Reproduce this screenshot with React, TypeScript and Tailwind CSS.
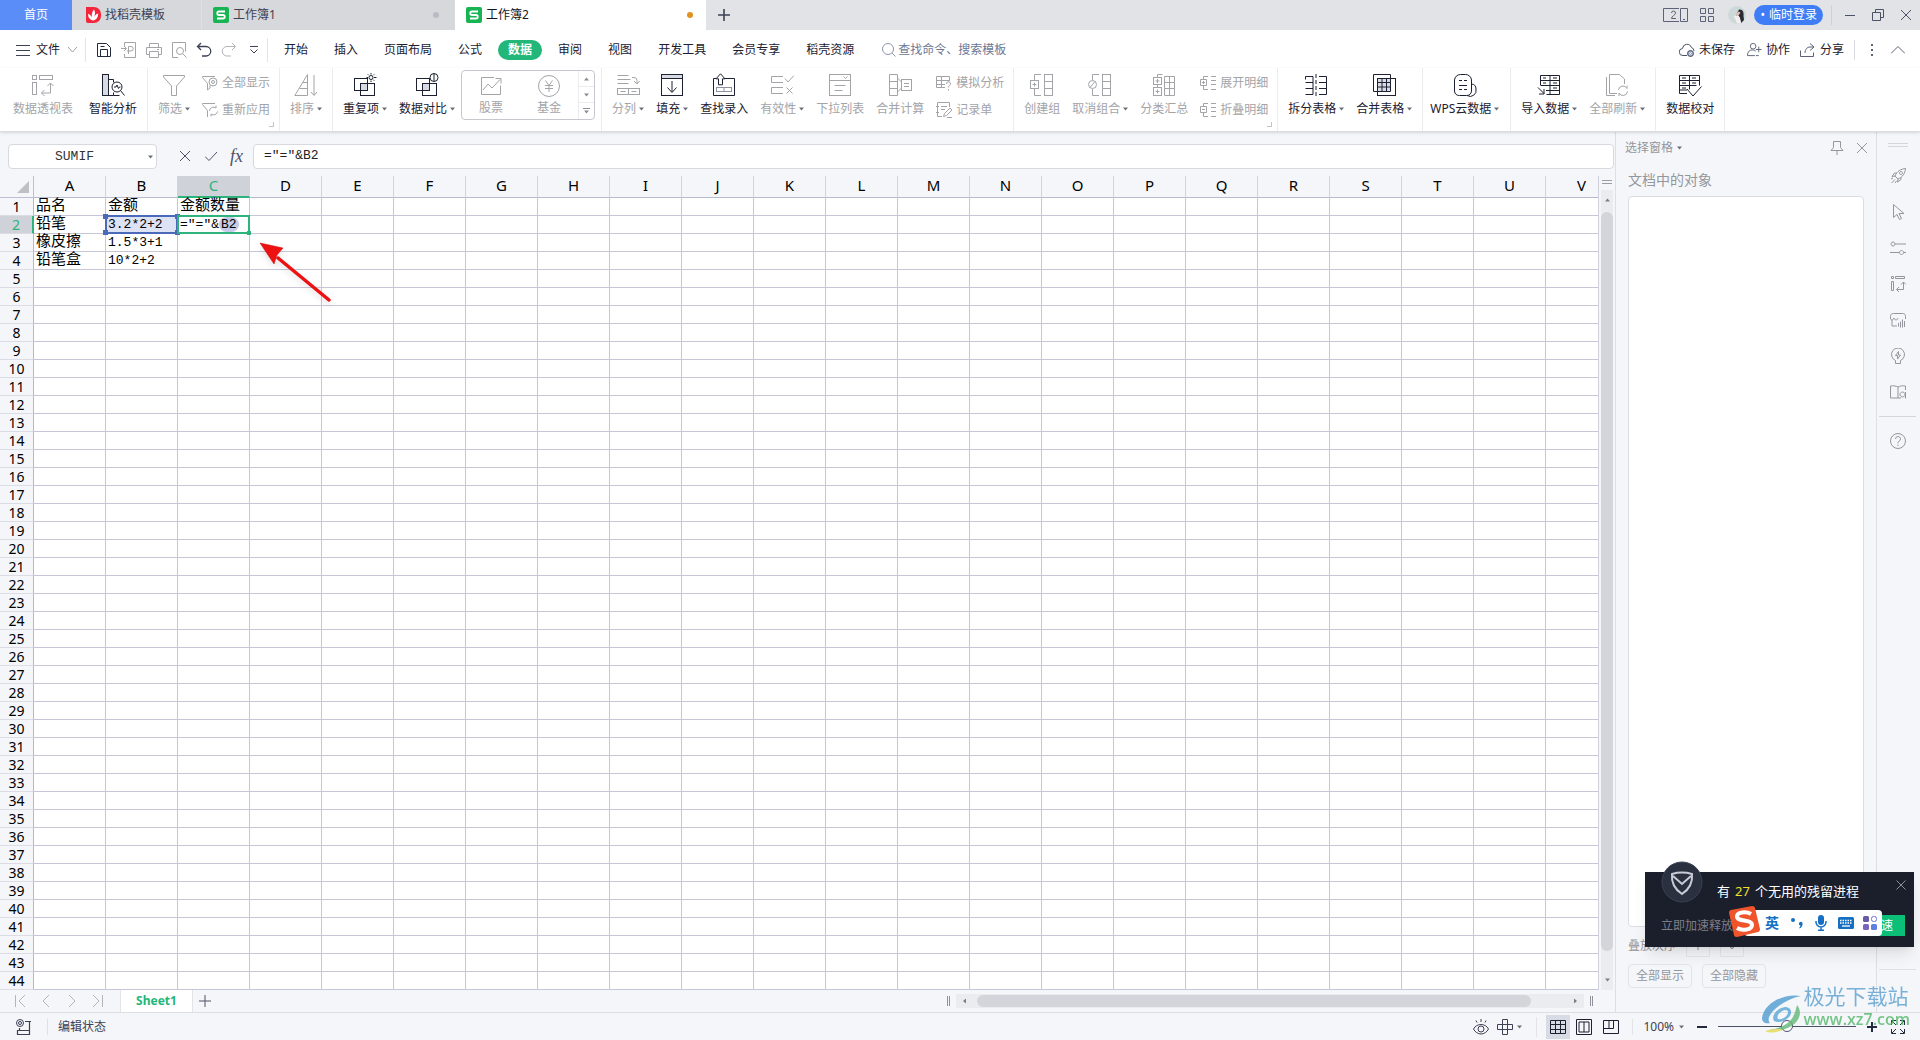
import type { ReactNode } from 'react';

const COLUMNS = 'ABCDEFGHIJKLMNOPQRSTUV'.split('');
const ROW_COUNT = 44;

const CELLS: Record<string, string> = {
  A1: '品名',
  B1: '金额',
  C1: '金额数量',
  A2: '铅笔',
  B2: '3.2*2+2',
  A3: '橡皮擦',
  B3: '1.5*3+1',
  A4: '铅笔盒',
  B4: '10*2+2',
};

interface IconProps {
  children: ReactNode;
  className?: string;
  box?: number;
}

function Icon({ children, className = 'size-6', box = 24 }: IconProps) {
  return (
    <svg
      viewBox={`0 0 ${box} ${box}`}
      className={`shrink-0 ${className}`}
      fill="none"
      stroke="currentColor"
      aria-hidden="true"
    >
      {children}
    </svg>
  );
}

function Caret({ className = 'text-[#6b6e78]' }: { className?: string }) {
  return (
    <svg viewBox="0 0 5 4" className={`h-1 w-[5px] shrink-0 ${className}`} fill="currentColor" aria-hidden="true">
      <path d="M0 .5h5L2.5 3.5z" />
    </svg>
  );
}

/* ---------- ribbon icons, 24px grid ---------- */

const pivotIcon = (
  <Icon>
    <rect x="1.5" y="2.5" width="4" height="4" />
    <rect x="8.5" y="2.5" width="13" height="4" />
    <rect x="1.5" y="9.5" width="4" height="12" />
    <path d="M19.5 10.5v9.5h-9M16.5 13l3-3 3 3M13.5 17l-3 3 3 3" />
  </Icon>
);

const analysisIcon = (
  <Icon>
    <rect x="1.5" y="1.5" width="6" height="21" fill="#d9dbe4" />
    <path d="M7.5 6.5h5v3M7.5 22.5h5v-3M12.5 22.5h6" />
    <circle cx="16" cy="14" r="5" />
    <path d="M19.5 17.5l4 5M13 14h2l1-2 1.5 3.5 1-1.5h1" />
  </Icon>
);

const filterIcon = (
  <Icon>
    <path d="M1.5 2.5h21v1.500L14.500 13v9.500h-5V13L1.500 4z" />
  </Icon>
);

const sortIcon = (
  <Icon>
    <path d="M13.500 1.500L.800 22.500h12.700zM9 9.500h4.500M5.500 15.500h8M20 2v20M17 19l3 3.500 3-3.500" />
  </Icon>
);

const duplicateIcon = (
  <Icon>
    <rect x="1.5" y="5.5" width="13" height="12" />
    <rect x="7.5" y="10.5" width="14" height="12" />
    <rect x="7.5" y="10.5" width="7" height="7" fill="#d9dbe4" />
    <circle cx="18" cy="4.5" r="2" />
    <path d="M18 0v1.5M18 7.5V9M13.5 4.5H15M21 4.5h2.5M14.8 1.3l1 1M21.2 1.3l-1 1M21.2 7.7l-1-1" />
  </Icon>
);

const compareIcon = (
  <Icon>
    <rect x="1.5" y="5.5" width="13" height="12" />
    <rect x="7.5" y="10.5" width="14" height="12" />
    <rect x="7.5" y="10.5" width="7" height="7" fill="#d9dbe4" />
    <circle cx="19" cy="4.5" r="4" fill="#fff" />
    <path d="M19 .5v8" />
  </Icon>
);

const stockIcon = (
  <Icon>
    <path d="M15 3.5H2.5v17h19v-9M4 16l5-6 4 4 8-8.5M16.5 4.5H22v5" />
  </Icon>
);

const fundIcon = (
  <Icon>
    <circle cx="12" cy="12" r="10.5" />
    <path d="M8.5 6.5l3.5 5 3.5-5M8 11.5h8M8 14.5h8M12 11.5V18" />
  </Icon>
);

const splitIcon = (
  <Icon>
    <path d="M1.5 2.5h11M1.5 6.5h13M1.5 10.5h11M16 4.5h2a3 3 0 0 1 3 3v3M18 8l3 3 2.5-3" />
    <rect x="1.5" y="15.5" width="11" height="6" />
    <rect x="12.5" y="15.5" width="11" height="6" />
    <path d="M4.500 18.500h5M15.500 18.500h5" />
  </Icon>
);

const fillIcon = (
  <Icon>
    <rect x="1.5" y="1.5" width="21" height="4" fill="#d9dbe4" />
    <rect x="1.5" y="1.5" width="21" height="21" />
    <path d="M12 8v11M7.5 14.5l4.5 5 4.5-5" />
  </Icon>
);

const lookupIcon = (
  <Icon>
    <path d="M4 5.5H1.500v17h21v-17H12.500" />
    <path d="M8.500.8l4.500 5h-2.500v6h-4v-6H4z" />
    <rect x="4.5" y="14.5" width="15" height="4" stroke="#8e929f" />
    <path d="M12 14.5v4" stroke="#8e929f" />
  </Icon>
);

const validIcon = (
  <Icon>
    <path d="M13 3.5H1.5v6H13M13 14.5H1.5v6H13M15 5.5L18 9l6-6.5M16.5 14.5l6 6M22.5 14.5l-6 6" />
  </Icon>
);

const listIcon = (
  <Icon>
    <rect x="1.5" y="1.5" width="21" height="21" />
    <path d="M1.5 7.500h21M6.500 12.500h11M6.500 17.500h8M15.500 3.500l2 2 2-2" />
  </Icon>
);

const consolidateIcon = (
  <Icon>
    <path d="M1.5 1.5h8v21h-8zM1.5 8.5h8M1.5 15.5h8M9.5 5l4 4M9.5 19l4-4" />
    <rect x="13.5" y="6.5" width="10" height="11" />
    <path d="M16 10.500h5M16 13.500h5" />
  </Icon>
);

const groupIcon = (
  <Icon>
    <rect x="14.5" y="1.5" width="8" height="21" />
    <path d="M14.5 8.5h8M14.5 15.5h8M11 1.5H4.500v6M4.500 15.500v7H11" />
    <rect x=".5" y="7.5" width="8" height="8" />
    <path d="M4.500 9.500v4M2.500 11.500h4" />
  </Icon>
);

const ungroupIcon = (
  <Icon>
    <rect x="14.5" y="1.5" width="8" height="21" />
    <path d="M14.5 8.5h8M14.5 15.5h8M11 1.5H4.500v6M4.500 16v6.500H11" />
    <circle cx="4.500" cy="11.500" r="4" />
    <path d="M2 14.500l5-6" />
  </Icon>
);

const subtotalIcon = (
  <Icon>
    <path d="M12.5 3.5h10v19h-10zM12.5 9.500h10M12.500 15.500h10M17.500 3.500v19M5.500 4.500v-3h5M5.500 11.500v3" />
    <rect x="1.5" y="4.5" width="8" height="7" />
    <rect x="1.5" y="14.5" width="8" height="8" />
    <path d="M5.5 6v4M3.5 8h4M5.5 16.5v4M3.5 18.5h4" />
  </Icon>
);

const splitTableIcon = (
  <Icon>
    <path d="M9 3.5H1.5M1.500 21.500H9M9 3.500v18M1.500 9.500H9M1.500 15.500H9M1.500 3.500v3M15 3.500h7.500v18H15M15 9.500h7.500M15 15.500h7.500" />
    <path d="M12 1v22" strokeDasharray="4 2" />
  </Icon>
);

const mergeTableIcon = (
  <Icon>
    <path d="M5.500 18.500h-4v-17h17v4" />
    <rect x="5.5" y="5.5" width="18" height="17" />
    <path d="M5.500 5.500h13v13h-13zM5.500 9.500h13M5.500 14h13M10 5.500v13M14.500 5.500v13" fill="#d9dbe4" />
  </Icon>
);

const cloudDataIcon = (
  <Icon>
    <path d="M18.5 7v11a5 5 0 0 1-5 4.5h-7a5 5 0 0 1-5-4.5V7a6 6 0 0 1 6-5.5h5a6 6 0 0 1 6 5.5zM18.500 11a5 5 0 0 1 4.500 5 6 6 0 0 1-9 6.500" />
    <path d="M6 7.5h3M11 7.5h3M6 12.5h8M6 16.5h3M11 16.5h3" />
  </Icon>
);

const importIcon = (
  <Icon>
    <path d="M3.5 12V2.5h19v19h-13M3.5 7.5h19M3.5 12.5h19M9 17.5h13.5M13 2.5v19" />
    <path d="M6 5h3M6 10h3M16 5h4M16 10h4M16 15h4M1 14.5l6 6M7 16v5H2" />
  </Icon>
);

const refreshAllIcon = (
  <Icon>
    <path d="M12 20.5H4.5v-19h10l5 4.5v5M1.5 4v18.5H10" />
    <path d="M13.5 17a4.500 4.500 0 0 1 8.500-1.500v-3M22.500 18.500a4.500 4.500 0 0 1-8.500 1.500v3" />
  </Icon>
);

const proofIcon = (
  <Icon>
    <path d="M9 20.500H1.500v-18h20v10M1.500 7.500h20M1.500 12.500h17M1.500 17H9M11.500 2.500v14" />
    <path d="M4 5h4M4 10h4M14 5h4M14 10h4M4 15h4M9 16l6 7 8.500-9.500" />
  </Icon>
);

/* ---------- title bar ---------- */

function SpreadsheetLogo() {
  return (
    <svg viewBox="0 0 16 16" className="size-4 shrink-0" aria-hidden="true">
      <rect width="16" height="16" rx="2" fill="#18b352" />
      <path d="M12 4.500H6a1.700 1.700 0 0 0 0 3.500h4a1.700 1.700 0 0 1 0 3.500H4" fill="none" stroke="#fff" strokeWidth="1.8" />
    </svg>
  );
}

function DocerLogo() {
  return (
    <svg viewBox="0 0 16 16" className="size-4 shrink-0" aria-hidden="true">
      <path d="M1 0h8a7 7 0 0 1 7 7v2a7 7 0 0 1-7 7H3a2 2 0 0 1-2-2z" fill="#f5263c" />
      <path
        d="M7.800 13.500C4 12.500 2.800 9.500 3.200 6.800c2 .900 3.300 2.300 3.900 4.200C6.300 7.500 7 4.500 9 2.500c1.500 2.300 1.300 5-.200 8.200.900-2.300 2.300-3.800 4.400-4.300-.100 3.800-1.700 6.500-5.400 7.100z"
        fill="#fff"
      />
    </svg>
  );
}

function TitleBar() {
  return (
    <header className="flex h-[30px] shrink-0 items-center bg-[#e1e3e7] text-[12px] leading-4 text-[#3c4254]">
      <button className="h-full w-[72px] bg-[#5b8df8] text-white">首页</button>
      <button className="flex h-full w-[129px] items-center gap-1 bg-[#d6d8dc] pl-[13px]">
        <DocerLogo />
        找稻壳模板
      </button>
      <button className="flex h-full w-[254px] items-center gap-1 border-l border-[#dddfe3] bg-[#d6d8dc] pr-4 pl-[11px]">
        <SpreadsheetLogo />
        工作簿1
        <span className="ml-auto size-1.5 rounded-full bg-[#b9bcc4]" />
      </button>
      <button className="flex h-full w-[251px] items-center gap-1 bg-white pr-[13px] pl-[11px] text-[#15171c]">
        <SpreadsheetLogo />
        工作簿2
        <span className="ml-auto size-1.5 rounded-full bg-[#e0921e]" />
      </button>
      <button className="ml-3 text-[#3c4254]" aria-label="新建">
        <Icon className="size-3" box={12}>
          <path d="M6 0v12M0 6h12" strokeWidth="1.6" />
        </Icon>
      </button>
      <div className="ml-auto flex h-full items-center pr-2">
        <button className="mr-3" aria-label="窗口">
          <svg viewBox="0 0 25 15" className="h-[15px] w-[25px]" fill="none" stroke="#5d6376" aria-hidden="true">
            <path d="M16 .5H.5v13H16M17.5.5h7v13h-7zM20 11.5h2M8.500 5a2 2 0 0 1 4 0c0 2-4 3-4 5.500h4.500" />
          </svg>
        </button>
        <button className="mr-[14px] text-[#5d6376]" aria-label="应用">
          <Icon className="size-[14px]" box={14}>
            <path d="M.5.5h5v5h-5zM8.500.5h5v5h-5zM.5 8.500h5v5h-5zM8.500 8.500h5v5h-5z" />
          </Icon>
        </button>
        <svg viewBox="0 0 18 18" className="mr-2 size-[18px]" aria-hidden="true">
          <circle cx="9" cy="9" r="9" fill="#cdd9d8" />
          <path d="M11 3.500c4-.500 5 3 4.500 6.500L16 14l-3 3-1-4-1-3-3 1 1-4z" fill="#2b2a33" />
          <path d="M6 10l4-1 2 3 1 5-4 .500z" fill="#f3eef0" />
          <path d="M7 8.500l3.500-3 2 1-2 3z" fill="#e3bfb6" />
        </svg>
        <button className="h-5 rounded-full bg-[#3f7df6] px-[6px] whitespace-nowrap text-white">
          <span className="mr-1">•</span>临时登录
        </button>
        <span className="ml-2 h-5 w-px bg-[#cfd1d6]" />
        <button className="ml-3 text-[#4c5266]" aria-label="最小化">
          <Icon className="size-3" box={12}>
            <path d="M1 6.5h10" />
          </Icon>
        </button>
        <button className="ml-4 text-[#4c5266]" aria-label="还原">
          <Icon className="size-3" box={12}>
            <path d="M.5 3.5h8v8h-8zM3.5 3.5v-3h8v8h-3" />
          </Icon>
        </button>
        <button className="ml-4 text-[#4c5266]" aria-label="关闭">
          <Icon className="size-3" box={12}>
            <path d="M1 1l10 10M11 1L1 11" />
          </Icon>
        </button>
      </div>
    </header>
  );
}

/* ---------- menu row ---------- */

const MENUS = ['开始', '插入', '页面布局', '公式', '数据', '审阅', '视图', '开发工具', '会员专享', '稻壳资源'];

function MenuBar() {
  return (
    <nav className="flex h-[38px] shrink-0 items-center pt-px pr-[15px] pl-4 text-[12px] leading-4 whitespace-nowrap text-[#1c2030]">
      <button className="flex items-center gap-[6px]">
        <Icon className="size-[14px] text-[#3c4254]" box={14}>
          <path d="M0 2.5h14M0 7.5h14M0 12.5h14" />
        </Icon>
        文件
        <Icon className="ml-[2px] size-[9px] text-[#9a9da6]" box={9}>
          <path d="M0 2l4.5 5L9 2" />
        </Icon>
      </button>
      <span className="ml-2 h-6 w-px bg-[#e3e4e8]" />
      <div className="ml-[10px] flex items-center gap-[9px]">
        <button aria-label="保存" className="text-[#242a3e]">
          <Icon className="size-4" box={16}>
            <path d="M1.5 1.5h9l4 4v9h-13zM4.5 14V7.500h7V14M4.500 4.500h4" />
          </Icon>
        </button>
        <button aria-label="输出为PDF" className="text-[#a3a4a8]">
          <Icon className="size-4" box={16}>
            <path d="M3.5 4V.5h11v15h-11V12M0 6.5h5M3 4l2.5 2.5L3 9M7.500 12V4.500h2.500a2 2 0 0 1 0 4.500H6" />
          </Icon>
        </button>
        <button aria-label="打印" className="text-[#a3a4a8]">
          <Icon className="size-4" box={16}>
            <path d="M3.5 5V1.5h9V5M3.5 12.5h-3v-7h15v7h-3M3.5 9.5h9v6h-9zM11 7.5h2" />
          </Icon>
        </button>
        <button aria-label="打印预览" className="text-[#a3a4a8]">
          <Icon className="size-4" box={16}>
            <path d="M7 15.5H1.5V.5h13v9" />
            <circle cx="9" cy="9" r="3.5" />
            <path d="M11.5 11.5l4 4" />
          </Icon>
        </button>
        <button aria-label="撤销" className="text-[#3c4254]">
          <Icon className="size-4" box={16}>
            <path d="M5 1L1.5 4.5 5 8M1.5 4.5H10A4.500 4.500 0 0 1 10 14H6" strokeWidth="1.3" />
          </Icon>
        </button>
        <button aria-label="恢复" className="text-[#b4b5b9]">
          <Icon className="size-4" box={16}>
            <path d="M11 1l3.5 3.5L11 8M14.5 4.5H6A4.500 4.500 0 0 0 6 14h4" />
          </Icon>
        </button>
        <button aria-label="自定义快速访问工具栏" className="ml-1 text-[#3c4254]">
          <Icon className="size-2" box={8}>
            <path d="M0 .5h8M.5 3.500L4 7l3.500-3.500" />
          </Icon>
        </button>
      </div>
      <span className="ml-[9px] h-6 w-px bg-[#e3e4e8]" />
      <div className="ml-[6px] flex items-center gap-[6px]">
        {MENUS.map((menu) => (
          <button
            key={menu}
            className={
              menu === '数据'
                ? 'h-5 rounded-full bg-[#22b779] px-[10px] font-bold text-white'
                : 'h-5 px-[10px]'
            }
          >
            {menu}
          </button>
        ))}
      </div>
      <label className="ml-[18px] flex items-center gap-[2px] text-[#6c7896]">
        <Icon className="size-[14px] text-[#8d96ad]" box={14}>
          <circle cx="6" cy="6" r="5.5" />
          <path d="M10 10l3.5 3.5" />
        </Icon>
        <input
          className="w-32 bg-transparent outline-none placeholder:text-[#6c7896]"
          placeholder="查找命令、搜索模板"
          aria-label="查找命令、搜索模板"
        />
      </label>
      <div className="ml-auto flex items-center">
        <button className="flex items-center gap-1">
          <Icon className="size-4 text-[#4c5266]" box={16}>
            <path d="M8 13.500H4a3.500 3.500 0 0 1-.500-7A4.500 4.500 0 0 1 12.300 5.500 3.500 3.500 0 0 1 15 9" />
            <circle cx="11.500" cy="11.500" r="3" fill="#9aa3bb" />
            <path d="M10.300 10.300l2.400 2.400M12.700 10.300l-2.400 2.400" stroke="#fff" />
          </Icon>
          未保存
        </button>
        <button className="ml-3 flex items-center gap-1">
          <Icon className="size-[15px] text-[#5d6376]" box={16}>
            <circle cx="6.500" cy="4.500" r="3" />
            <path d="M8.500 14.500h-8c0-4 2-6 5-6 2 0 3 .500 4 1.500M9.500 14.500h3M12.500 5v6M9.500 8h6" />
          </Icon>
          协作
        </button>
        <button className="ml-[10px] flex items-center gap-1">
          <Icon className="size-4 text-[#5d6376]" box={16}>
            <path d="M.5 8.500v6h13v-4M10 1.500L14 5l-4 3.500M14 5H10c-3 0-5 2.500-5 6" />
          </Icon>
          分享
        </button>
        <span className="ml-[10px] h-5 w-px bg-[#d9dbe0]" />
        <button className="ml-4 text-[#5d6376]" aria-label="更多">
          <svg viewBox="0 0 2 12" className="h-3 w-[2px]" fill="currentColor" aria-hidden="true">
            <path d="M0 0h2v2H0zM0 5h2v2H0zM0 10h2v2H0z" />
          </svg>
        </button>
        <button className="ml-[18px] text-[#5d6376]" aria-label="折叠功能区">
          <Icon className="size-[14px]" box={14}>
            <path d="M0 10.500l7-7 7 7" />
          </Icon>
        </button>
      </div>
    </nav>
  );
}

/* ---------- ribbon ---------- */

interface ToolProps {
  icon: ReactNode;
  label: string;
  menu?: boolean;
  disabled?: boolean;
}

function Tool({ icon, label, menu, disabled }: ToolProps) {
  return (
    <button
      disabled={disabled}
      className={`flex flex-col items-center px-[6px] pt-[5px] ${disabled ? 'text-[#a3a4a8]' : 'text-[#1c2030]'}`}
    >
      {icon}
      <span className="mt-1 flex items-center gap-[3px]">
        {label}
        {menu && <Caret />}
      </span>
    </button>
  );
}

function SmallTool({ icon, label }: { icon: ReactNode; label: string }) {
  return (
    <button disabled className="flex h-[27px] items-center gap-1 pr-[5px] pl-[6px] text-[#a3a4a8]">
      {icon}
      {label}
    </button>
  );
}

function ToolGroup({ children, className = 'px-1' }: { children: ReactNode; className?: string }) {
  return <div className={`relative flex shrink-0 border-r border-[#ececef] ${className}`}>{children}</div>;
}

function Launcher() {
  return <span className="absolute right-[5px] bottom-1 size-[5px] border-r border-b border-[#c3c4c9]" />;
}

function Ribbon() {
  return (
    <div className="relative z-10 flex h-16 shrink-0 overflow-hidden border-b border-[#dcdee3] bg-white text-[12px] leading-4 whitespace-nowrap shadow-sm">
      <ToolGroup className="gap-1 pr-1 pl-[7px]">
        <Tool icon={pivotIcon} label="数据透视表" disabled />
        <Tool icon={analysisIcon} label="智能分析" />
      </ToolGroup>
      <ToolGroup>
        <Tool icon={filterIcon} label="筛选" menu disabled />
        <div className="pt-px">
          <SmallTool
            icon={
              <Icon className="size-4" box={16}>
                <path d="M5.5 15V8.500L.5 2.500V1.500H13" />
                <circle cx="11" cy="7" r="4" />
                <circle cx="11" cy="7" r="1.5" />
                <path d="M8 10.500V13l-2.500 2" />
              </Icon>
            }
            label="全部显示"
          />
          <SmallTool
            icon={
              <Icon className="size-4" box={16}>
                <path d="M5.5 15V8.500L.5 2.500V1.500H13" />
                <path d="M7.500 9A4 4 0 0 1 14 6V3.500M15.500 9.500A4 4 0 0 1 9 12v2.500" />
              </Icon>
            }
            label="重新应用"
          />
        </div>
        <Launcher />
      </ToolGroup>
      <ToolGroup>
        <Tool icon={sortIcon} label="排序" menu disabled />
      </ToolGroup>
      <ToolGroup>
        <Tool icon={duplicateIcon} label="重复项" menu />
        <Tool icon={compareIcon} label="数据对比" menu />
        <div className="mt-[2px] mr-[2px] flex h-[50px] rounded-sm border border-[#c6c8ce]">
          <button disabled className="flex w-[58px] flex-col items-center pt-[3px] text-[#a3a4a8]">
            {stockIcon}
            <span className="mt-[2px]">股票</span>
          </button>
          <button disabled className="flex w-[58px] flex-col items-center pt-[3px] text-[#a3a4a8]">
            {fundIcon}
            <span className="mt-[2px]">基金</span>
          </button>
          <div className="grid w-4 grid-rows-3 divide-y divide-[#ececef] border-l border-[#ececef]">
            <button className="flex items-center justify-center" aria-label="向上">
              <Caret className="rotate-180 text-[#8a8c94]" />
            </button>
            <button className="flex items-center justify-center" aria-label="向下">
              <Caret className="text-[#8a8c94]" />
            </button>
            <button className="flex flex-col items-center justify-center gap-px" aria-label="展开">
              <span className="h-px w-[7px] bg-[#8a8c94]" />
              <Caret className="text-[#8a8c94]" />
            </button>
          </div>
        </div>
      </ToolGroup>
      <ToolGroup>
        <Tool icon={splitIcon} label="分列" menu disabled />
        <Tool icon={fillIcon} label="填充" menu />
        <Tool icon={lookupIcon} label="查找录入" />
        <Tool icon={validIcon} label="有效性" menu disabled />
        <Tool icon={listIcon} label="下拉列表" disabled />
        <Tool icon={consolidateIcon} label="合并计算" disabled />
        <div className="pt-px">
          <SmallTool
            icon={
              <Icon className="size-4" box={16}>
                <path d="M9 12.500H.5v-11h13V6M.5 5.500h13M.5 9.500H9M5.500 1.500v11M10.500 9a2 2 0 1 1 3 1.500c-1 .500-1 1-1 2M12.500 14v1.500" />
              </Icon>
            }
            label="模拟分析"
          />
          <SmallTool
            icon={
              <Icon className="size-4" box={16}>
                <path d="M13.500 5V.5h-12v14H6M0 4.500h3M0 10.500h3M5 4.500h6M5 7.500h4M7.500 14.500l1-3L14 6l2 2-5.500 5.500zM11 15.500h5" />
              </Icon>
            }
            label="记录单"
          />
        </div>
      </ToolGroup>
      <ToolGroup>
        <Tool icon={groupIcon} label="创建组" disabled />
        <Tool icon={ungroupIcon} label="取消组合" menu disabled />
        <Tool icon={subtotalIcon} label="分类汇总" disabled />
        <div className="pt-px">
          <SmallTool
            icon={
              <Icon className="size-4" box={16}>
                <path d="M8 1.500H3.500v3M3.500 11v3.500H8M.5 4.500h6v6h-6zM3.500 6v3M2 7.500h3M11 1.500h5M11 5.500h5M11 9.500h5M11 14.500h5" />
              </Icon>
            }
            label="展开明细"
          />
          <SmallTool
            icon={
              <Icon className="size-4" box={16}>
                <path d="M8 1.500H3.500v3M3.500 11v3.500H8M.5 4.500h6v6h-6zM2 7.500h3M11 1.500h5M11 5.500h5M11 9.500h5M11 14.500h5" />
              </Icon>
            }
            label="折叠明细"
          />
        </div>
        <Launcher />
      </ToolGroup>
      <ToolGroup>
        <Tool icon={splitTableIcon} label="拆分表格" menu />
        <Tool icon={mergeTableIcon} label="合并表格" menu />
      </ToolGroup>
      <ToolGroup className="pr-[5px] pl-px">
        <Tool icon={cloudDataIcon} label="WPS云数据" menu />
      </ToolGroup>
      <ToolGroup>
        <Tool icon={importIcon} label="导入数据" menu />
        <Tool icon={refreshAllIcon} label="全部刷新" menu disabled />
      </ToolGroup>
      <ToolGroup>
        <Tool icon={proofIcon} label="数据校对" />
      </ToolGroup>
    </div>
  );
}

/* ---------- formula bar and grid ---------- */

function FormulaBar() {
  return (
    <div className="flex h-11 shrink-0 items-start pt-3 pl-2 text-[#4c5266]">
      <div className="flex h-[25px] w-[149px] items-center rounded-sm border border-[#d7d9de] bg-white pr-[3px]">
        <input
          className="w-full min-w-0 bg-transparent pr-2 text-center font-['Liberation_Mono',monospace] text-[13px] leading-4 text-[#333] outline-none"
          defaultValue="SUMIF"
          aria-label="名称框"
        />
        <Caret />
      </div>
      <button className="mt-[6px] ml-[22px]" aria-label="取消">
        <Icon className="size-3" box={12}>
          <path d="M1 1l10 10M11 1L1 11" />
        </Icon>
      </button>
      <button className="mt-[6px] ml-[14px]" aria-label="输入">
        <Icon className="size-3" box={12}>
          <path d="M0 6.5l4 4L12 2" />
        </Icon>
      </button>
      <button className="ml-[13px] h-6 font-['Liberation_Serif',serif] text-[18px] leading-6 italic" aria-label="插入函数">
        fx
      </button>
      <input
        className="mr-px ml-[10px] h-[25px] flex-1 rounded-sm border border-[#d7d9de] bg-white pb-[2px] pl-[10px] font-['Liberation_Mono',monospace] text-[13px] leading-4 text-[#222] outline-none"
        defaultValue={'="="&B2'}
        aria-label="编辑栏"
      />
    </div>
  );
}

function CellContent({ id }: { id: string }) {
  if (id === 'C2') {
    return (
      <>
        <span className="relative z-10">
          ="="&amp;<span className="rounded-full bg-[#c5cbe6] px-[2px]">B2</span>
        </span>
        <span className="absolute -inset-px border-2 border-[#2eb37c]" />
        <span className="absolute -right-[2px] -bottom-[2px] size-1 bg-[#2eb37c]" />
      </>
    );
  }
  if (id === 'B2') {
    return (
      <>
        {CELLS[id]}
        <span className="absolute -inset-px border-2 border-[#4a69b8]" />
        <span className="absolute -top-[2px] -left-[3px] size-[5px] bg-[#4a69b8]" />
        <span className="absolute -top-[2px] -right-[3px] size-[5px] bg-[#4a69b8]" />
        <span className="absolute -bottom-[2px] -left-[3px] size-[5px] bg-[#4a69b8]" />
        <span className="absolute -right-[3px] -bottom-[2px] size-[5px] bg-[#4a69b8]" />
      </>
    );
  }
  return <>{CELLS[id]}</>;
}

function cellClass(id: string) {
  const base =
    "relative h-[18px] border-r border-b border-[#c6c6d6] p-0 pt-px pl-[2px] align-middle leading-4 font-['Liberation_Mono','Noto_Sans_CJK_SC',monospace]";
  const size = /^(A|.1)/.test(id) ? 'text-[15px]' : 'text-[13px]';
  if (id === 'B2') return `${base} ${size} z-10 bg-[#dde3f4]`;
  if (id === 'C2') return `${base} ${size} z-10 bg-white`;
  return `${base} ${size} bg-white`;
}

function Sheet() {
  return (
    <div className="relative min-w-0 flex-1 overflow-hidden border-r border-[#d0d1dc]">
      <table className="w-[1618px] table-fixed border-separate border-spacing-0 whitespace-nowrap text-black">
        <colgroup>
          <col className="w-[34px]" />
          {COLUMNS.map((col) => (
            <col key={col} className="w-[72px]" />
          ))}
        </colgroup>
        <thead className="font-['Noto_Sans',sans-serif] text-[15px] leading-[18px]">
          <tr>
            <th className="relative h-[22px] border-r border-b border-[#bcc0d0] p-0">
              <svg viewBox="0 0 12 12" className="absolute right-1 bottom-1 size-3" fill="#bfc0c5" aria-hidden="true">
                <path d="M12 0v12H0z" />
              </svg>
            </th>
            {COLUMNS.map((col) => (
              <th
                key={col}
                className={
                  col === 'C'
                    ? 'h-[22px] border-r border-b-2 border-r-[#d0d2d8] border-b-[#2eb37c] bg-[#d0d2d9] p-0 align-top font-normal text-[#2eb37c]'
                    : 'h-[22px] border-r border-b border-r-[#d0d2dc] border-b-[#b4bccb] p-0 align-top font-normal'
                }
              >
                {col}
              </th>
            ))}
          </tr>
        </thead>
        <tbody>
          {Array.from({ length: ROW_COUNT }, (_, i) => i + 1).map((row) => (
            <tr key={row}>
              <th
                className={`h-[18px] border-b border-b-[#dcdde4] p-0 text-center font-['Noto_Sans',sans-serif] text-[14px] leading-4 font-normal ${
                  row === 2
                    ? 'border-r-2 border-r-[#2eb37c] bg-[#d0d2d9] text-[#2eb37c]'
                    : 'border-r border-r-[#b4b8cc]'
                }`}
              >
                {row}
              </th>
              {COLUMNS.map((col) => (
                <td key={col} className={cellClass(`${col}${row}`)}>
                  <CellContent id={`${col}${row}`} />
                </td>
              ))}
            </tr>
          ))}
        </tbody>
      </table>
      {/* red callout arrow pointing at C2 */}
      <svg viewBox="0 0 84 72" className="absolute top-[62px] left-[256px] z-20 h-[72px] w-[84px] drop-shadow-md" aria-hidden="true">
        <path d="M22 20L73 62" stroke="#ee1111" strokeWidth="3.5" strokeLinecap="round" />
        <path d="M4 5l23 5-6 7-3 9z" fill="#ee1111" stroke="#c40808" strokeWidth=".5" />
      </svg>
    </div>
  );
}

function VerticalScroll() {
  return (
    <div className="flex w-4 shrink-0 flex-col items-center">
      <span className="mt-1 h-1 w-[10px] border-y border-[#9a9da6]" />
      <div className="mt-[6px] flex w-3 flex-1 flex-col items-center bg-[#ebecf0] text-[#7a7d87]">
        <Caret className="mt-2 rotate-180" />
        <span className="mt-[10px] w-3 flex-1 rounded-full bg-[#d3d5da]" />
        <Caret className="mt-[27px] mb-2" />
      </div>
    </div>
  );
}

function SheetTabs() {
  const nav = [
    { label: '第一张', d: 'M1.5 0v12M11 0L5 6l6 6' },
    { label: '上一张', d: 'M9 0L3 6l6 6' },
    { label: '下一张', d: 'M3 0l6 6-6 6' },
    { label: '最后一张', d: 'M1 0l6 6-6 6M10.5 0v12' },
  ];

  return (
    <div className="flex h-[22px] shrink-0 items-center pl-[14px]">
      <div className="flex gap-[14px] text-[#b2b4ba]">
        {nav.map(({ label, d }) => (
          <button key={label} aria-label={label}>
            <Icon className="size-3" box={12}>
              <path d={d} />
            </Icon>
          </button>
        ))}
      </div>
      <button className="ml-[16px] h-full w-[73px] border-x border-[#e3e4e8] bg-white text-[12px] leading-4 font-bold text-[#22b779]">
        Sheet1
      </button>
      <button className="ml-[6px] text-[#4c5266]" aria-label="新建工作表">
        <Icon className="size-3" box={12}>
          <path d="M6 0v12M0 6h12" />
        </Icon>
      </button>
      <div className="ml-auto flex items-center pr-[22px]">
        <span className="h-[10px] w-[3px] border-x border-[#8f929b]" />
        <div className="mx-[6px] flex h-[14px] w-[628px] items-center bg-[#ebecf0] px-1 text-[#7a7d87]">
          <Caret className="mx-[2px] rotate-90" />
          <span className="ml-2 h-3 flex-1 rounded-full bg-[#d3d5da]" />
          <Caret className="mr-[2px] ml-[42px] -rotate-90" />
        </div>
        <span className="h-[10px] w-[3px] border-x border-[#8f929b]" />
      </div>
    </div>
  );
}

/* ---------- right side ---------- */

function SelectionPane() {
  return (
    <aside className="flex w-[261px] shrink-0 flex-col border-l border-[#dedfe5] pr-3 pl-3 text-[12px] leading-4 text-[#94969e]">
      <div className="-ml-[3px] flex items-center pt-2">
        <button className="flex items-center gap-1">
          选择窗格
          <Caret />
        </button>
        <button className="ml-auto" aria-label="固定">
          <Icon className="size-[14px]" box={14}>
            <path d="M3.5.5h7v6L13 9.500H1l2.500-3zM7 9.500V14" />
          </Icon>
        </button>
        <button className="-mr-1 ml-3" aria-label="关闭窗格">
          <Icon className="size-3" box={12}>
            <path d="M1 1l10 10M11 1L1 11" />
          </Icon>
        </button>
      </div>
      <h2 className="mt-[14px] text-[14px] leading-5">文档中的对象</h2>
      <div className="mt-[6px] flex-1 rounded-sm border border-[#dcdde3] bg-white" />
      <div className="mt-2 flex h-[22px] items-center">
        叠放次序
        <button className="ml-[10px] flex h-[22px] w-6 items-center justify-center border border-[#e6e7ec]" aria-label="上移">
          <Icon className="size-2" box={8}>
            <path d="M4 8V1M1 4l3-3 3 3" />
          </Icon>
        </button>
        <button className="ml-[10px] flex h-[22px] w-6 items-center justify-center border border-[#e6e7ec]" aria-label="下移">
          <Icon className="size-2" box={8}>
            <path d="M4 0v7M1 4l3 3 3-3" />
          </Icon>
        </button>
      </div>
      <div className="mt-[7px] mb-6 flex gap-[10px]">
        <button className="h-6 w-16 rounded-sm border border-[#e3e4ea]">全部显示</button>
        <button className="h-6 w-16 rounded-sm border border-[#e3e4ea]">全部隐藏</button>
      </div>
    </aside>
  );
}

const RAIL_ICONS = [
  {
    label: '推荐',
    art: <path d="M5 8C7 3 11 1 15.500.5 15 5 13 9 8 11zM5 8l-3 .5L4.500 5h2M8 11l-.5 3L11 11.500v-2M1 11l2-1M1.500 15L5 11.500M5 15l1.500-2M11 3.500a1.500 1.500 0 1 0 .010 0" />,
  },
  { label: '选择', art: <path d="M3.500.5v13l3.500-3 2.500 5 2-1-2.500-5h5z" /> },
  {
    label: '属性',
    art: <path d="M5 4h11M0 12.500h9.500M13.500 12.500H16M3 2a2 2 0 1 0 .010 0M11.500 10.500a2 2 0 1 0 .010 0" />,
  },
  {
    label: '分析',
    art: <path d="M1.500.5h2v2h-2zM5.500.5h9v2h-9zM1.500 5.500h2v9h-2zM13.500 6v7.500H7M11 8.500L13.500 6 16 8.500M9 11l-2.500 2.500L9 16" />,
  },
  {
    label: '图库',
    art: <path d="M2 7.500v6.500h5M.5 7V4.500c0-2 1-3 3-3h9c2 0 3 1 3 3V7M.5 7c1 1.500 3 1 3.500-1 .5 2.500 3.500 2.500 4 0M8.500 14.500v-3.500M10.500 15.500V9.500M12.500 15.500v-8M14.500 15v-6" />,
  },
  {
    label: '智能',
    art: <path d="M5.500 12.500A6.500 6.500 0 1 1 10.500 12.500v3h-5zM8.500 3.500L5.500 7.500h2v3.500l3-4h-2z" />,
  },
  {
    label: '查看',
    art: <path d="M8 14H.5V2c3-.5 5.500 0 7.500 1 2-1 4.500-1.500 7.500-1v4M8 3v11M8 14h3M12.500 8a2.500 2.500 0 1 0 .010 0M15.500 8v6.500" />,
  },
];

function SideRail() {
  return (
    <aside className="flex w-11 shrink-0 flex-col items-center border-l border-[#dedfe5] pr-[2px] text-[#94969e]">
      <span className="mt-[11px] h-1 w-5 border-y border-[#d5d6db]" />
      <div className="mt-[21px] flex flex-col gap-5">
        {RAIL_ICONS.map(({ label, art }) => (
          <button key={label} aria-label={label}>
            <Icon className="size-4" box={16}>
              {art}
            </Icon>
          </button>
        ))}
      </div>
      <span className="mt-4 h-px w-[37px] bg-[#d5d6db]" />
      <button className="mt-4" aria-label="帮助">
        <Icon className="size-4" box={16}>
          <circle cx="8" cy="8" r="7.5" />
          <path d="M5.500 6a2.500 2.500 0 1 1 3.500 2.300c-1 .5-1 1-1 2M8 11.500V13" />
        </Icon>
      </button>
      <span className="mt-auto mb-[42px] h-px w-[37px] bg-[#dfe0e5]" />
    </aside>
  );
}

/* ---------- status bar ---------- */

function StatusBar() {
  return (
    <footer className="flex h-7 shrink-0 items-center border-t border-[#dcdee3] pr-[14px] pl-4 text-[12px] leading-4 text-[#3c4254]">
      <Icon className="size-4" box={16}>
        <circle cx="4" cy="4" r="3.5" />
        <circle cx="4" cy="4" r="1.5" />
        <path d="M9 2.5h6M13.5 2.5v9M3.5 9v2.500h10v4h-12v-4h2" strokeWidth="1.2" />
      </Icon>
      <span className="mr-[10px] ml-[15px] h-4 w-px bg-[#dfe0e5]" />
      编辑状态
      <div className="ml-auto flex items-center">
        <button aria-label="护眼模式">
          <Icon className="size-4" box={16}>
            <path d="M.5 10C2 7 5 5.500 8 5.500S14 7 15.500 10C14 13 11 15 8 15S2 13 .5 10zM8 0v3M3 1.500l1 2M13 1.500l-1 2" />
            <circle cx="8" cy="10" r="3" />
          </Icon>
        </button>
        <button className="ml-2 flex items-center gap-1" aria-label="阅读模式">
          <Icon className="size-4" box={16}>
            <path d="M5.500.5h5v15h-5zM.5 5.500h15v5H.5z" />
          </Icon>
          <Caret />
        </button>
        <span className="mr-[9px] ml-[14px] h-5 w-px bg-[#e3e4e8]" />
        <button className="flex size-6 items-center justify-center bg-[#d7dbe3] text-[#1c2030]" aria-label="普通视图">
          <Icon className="size-4" box={16}>
            <path d="M.5 1.500h15v13H.5zM.5 5.500h15M.5 10.500h15M5.500 1.500v13M10.500 1.500v13" />
          </Icon>
        </button>
        <button className="ml-[6px] text-[#1c2030]" aria-label="页面布局">
          <Icon className="size-4" box={16}>
            <path d="M.5.5h15v15H.5zM3 3h10v10H3zM8 3v10" />
          </Icon>
        </button>
        <button className="ml-[11px] text-[#1c2030]" aria-label="分页预览">
          <Icon className="size-4" box={16}>
            <path d="M.5 1.500h15v13H.5zM.5 9.500h10v-8M6 1.500v8" />
          </Icon>
        </button>
        <span className="mr-[10px] ml-[13px] h-4 w-px bg-[#e3e4e8]" />
        <button className="flex items-center gap-[5px]">
          100%
          <Caret />
        </button>
        <button className="ml-3 text-[#242a3e]" aria-label="缩小">
          <Icon className="size-3" box={12}>
            <path d="M1 6h10" strokeWidth="2" />
          </Icon>
        </button>
        <input
          type="range"
          aria-label="显示比例"
          defaultValue={50}
          className="mx-[10px] h-3 w-[138px] appearance-none bg-transparent [&::-webkit-slider-runnable-track]:h-px [&::-webkit-slider-runnable-track]:bg-[#4c5266] [&::-webkit-slider-thumb]:-mt-[6px] [&::-webkit-slider-thumb]:size-3 [&::-webkit-slider-thumb]:appearance-none [&::-webkit-slider-thumb]:rounded-full [&::-webkit-slider-thumb]:border [&::-webkit-slider-thumb]:border-[#4c5266] [&::-webkit-slider-thumb]:bg-white"
        />
        <button className="text-[#242a3e]" aria-label="放大">
          <Icon className="size-3" box={12}>
            <path d="M6 1v10M1 6h10" strokeWidth="2" />
          </Icon>
        </button>
        <button className="ml-3 text-[#242a3e]" aria-label="全屏">
          <Icon className="size-4" box={16}>
            <path d="M1.500 6V1.500H6M10 1.500h4.500V6M14.500 10v4.500H10M6 14.500H1.500V10M2 2l4 4M14 2l-4 4M14 14l-4-4M2 14l4-4" />
          </Icon>
        </button>
      </div>
    </footer>
  );
}

/* ---------- things floating over the window ---------- */

function CleanupToast() {
  return (
    <div
      role="status"
      className="absolute right-[6px] bottom-[93px] z-30 h-[75px] w-[269px] bg-[#1b1f2b] text-white shadow-lg"
    >
      <svg viewBox="0 0 42 42" className="absolute -top-[11px] left-4 size-[42px]" aria-hidden="true">
        <circle cx="21" cy="21" r="20" fill="#2b3040" stroke="#3b4152" />
        <path d="M11 13c7-2 13-2 20 0 1 10-4 16-10 20-6-4-11-10-10-20z" fill="none" stroke="#c9ccd6" strokeWidth="2" />
        <path d="M12 15l9 8 9-8" fill="none" stroke="#c9ccd6" strokeWidth="2" />
      </svg>
      <div className="flex items-center pt-[10px] pl-[72px] text-[13px] leading-[18px]">
        有<span className="mx-[5px] text-[#f0e02a]">27</span>个无用的残留进程
      </div>
      <button className="absolute top-2 right-2 text-[#8c909c]" aria-label="关闭提示">
        <Icon className="size-[10px]" box={10}>
          <path d="M.5.5l9 9M9.5.5l-9 9" />
        </Icon>
      </button>
      <div className="mt-[15px] flex items-center justify-between pr-[9px] pl-4 text-[12px] leading-[21px] text-[#7b7f8b]">
        立即加速释放
        <button className="h-[21px] w-16 bg-[#0bbf78] pr-3 text-right text-white">加速</button>
      </div>
      <ImeBar />
    </div>
  );
}

function ImeBar() {
  return (
    <div className="absolute top-[38px] right-8 flex h-[26px] w-[138px] items-center rounded-sm bg-white pl-[21px] text-[#1570c4]">
      <svg viewBox="0 0 32 32" className="absolute -top-1 -left-4 size-8" aria-hidden="true">
        <path d="M3 4l21-4c2 0 3 1 3 2l5 21c0 2-1 3-2 3L9 31c-2 0-3-1-3-2L1 7c0-2 1-3 2-3z" fill="#f0542a" />
        <path d="M23 8c-5-3-14-2-14 2.500 0 6 15 2 15 8.500 0 5-10 6-15 3" fill="none" stroke="#fff" strokeWidth="4" />
      </svg>
      <span className="text-[14px] leading-5 font-bold">英</span>
      <svg viewBox="0 0 12 12" className="ml-3 size-3" fill="currentColor" aria-hidden="true">
        <circle cx="2" cy="3" r="2" />
        <path d="M8 6.500a1.800 1.800 0 0 1 3.600 0c0 2.500-1 4-3 5l-.5-.8c1-.7 1.400-1.500 1.400-2.200A1.600 1.600 0 0 1 8 6.500z" />
      </svg>
      <svg viewBox="0 0 12 16" className="ml-3 h-4 w-3" aria-hidden="true">
        <rect x="3" width="6" height="10" rx="3" fill="currentColor" />
        <path d="M1 6v1a5 5 0 0 0 10 0V6M6 12v3M3 15.200h6" fill="none" stroke="currentColor" strokeWidth="1.5" />
      </svg>
      <svg viewBox="0 0 16 12" className="ml-[11px] h-3 w-4" aria-hidden="true">
        <rect width="16" height="12" rx="1.5" fill="currentColor" />
        <path d="M2 3.500h12M2 6h12" stroke="#fff" strokeWidth="1.3" strokeDasharray="1.5 1" />
        <path d="M4 9h8" stroke="#fff" strokeWidth="1.3" />
      </svg>
      <svg viewBox="0 0 14 14" className="ml-[9px] size-[14px]" aria-hidden="true">
        <rect width="6" height="6" rx="1.5" fill="#6a5aa8" />
        <rect x="8.500" y=".5" width="5" height="5" rx="2" fill="none" stroke="#6a6fd8" />
        <rect y="8" width="6" height="6" rx="1.5" fill="#7d63c0" />
        <rect x="8" y="8" width="6" height="6" rx="1.5" fill="#5d7fe0" />
      </svg>
    </div>
  );
}

function Watermark() {
  return (
    <div className="pointer-events-none absolute right-[10px] bottom-[6px] z-30 flex items-center opacity-80">
      <svg viewBox="0 0 44 40" className="mt-4 h-10 w-11" aria-hidden="true">
        <path d="M41 2C24-1 4 9 2 24c0 4 3 6 8 5-3-3-1-8 4-13C21 9 31 4 41 2z" fill="#4f9bd0" />
        <path d="M14 27c-3-5 3-13 11-14 7 0 8 7 3 11-4 4-10 5-14 3zm4-2c3 1 7-1 9-4s1-5-2-5c-5 1-9 6-7 9z" fill="#5ba7d8" fillRule="evenodd" />
        <path d="M37 11c7 8 1 20-12 24-6 2-12 2-16 1 10-1 20-6 24-13 2-4 3-8 4-12z" fill="#62b878" />
        <path d="M5 37c6 3 12 1 18-1-4-2-12-1-18 1z" fill="#e4d94e" />
      </svg>
      <div className="whitespace-nowrap">
        <div className="text-[21px] leading-[26px] text-[#5a9fd0]">极光下载站</div>
        <div className="font-['Open_Sans',sans-serif] text-[16px] leading-5 font-semibold text-[#55b86c]">www.xz7.com</div>
      </div>
    </div>
  );
}

export default function App() {
  return (
    <div className="relative flex h-screen w-full flex-col overflow-hidden bg-[#f5f6f9] font-['Noto_Sans','Noto_Sans_CJK_SC',sans-serif]">
      <TitleBar />
      <div className="bg-white">
        <MenuBar />
      </div>
      <Ribbon />
      <main className="flex min-h-0 flex-1">
        <section className="flex min-w-0 flex-1 flex-col">
          <FormulaBar />
          <div className="flex min-h-0 flex-1">
            <Sheet />
            <VerticalScroll />
          </div>
          <SheetTabs />
        </section>
        <SelectionPane />
        <SideRail />
      </main>
      <StatusBar />
      <CleanupToast />
      <Watermark />
    </div>
  );
}
